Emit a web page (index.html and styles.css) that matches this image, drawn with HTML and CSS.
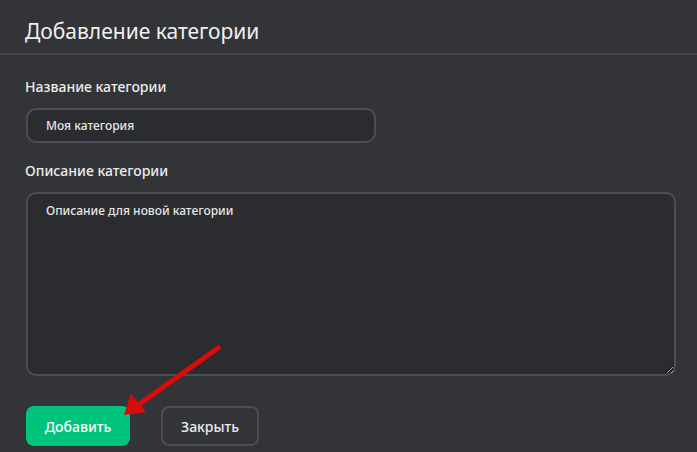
FILE: index.html
```html
<!DOCTYPE html>
<html lang="ru">

<head>
  <meta charset="UTF-8">
  <meta name="viewport" content="width=device-width, initial-scale=1.0">
  <title>Добавление категории</title>
  <link rel="stylesheet" href="styles.css">
</head>

<body>

  <div class="modal">
    <div class="modal_header">
      <h2>Добавление категории</h2>
    </div>

    <div class="modal_body">
      <label class="field_label" for="cat-name">Название категории</label>
      <input id="cat-name" class="field_input" type="text" value="Моя категория">

      <label class="field_label" for="cat-desc">Описание категории</label>
      <textarea id="cat-desc" class="field_area">Описание для новой категории</textarea>

      <div class="modal_actions">
        <button class="btn btn_primary">Добавить</button>
        <button class="btn btn_outline">Закрыть</button>
      </div>
    </div>

    <!-- annotation arrow -->
    <svg class="hint_arrow" width="110" height="80" viewBox="0 0 110 80">
      <line x1="106" y1="5" x2="22" y2="65" stroke="#dd0a0a" stroke-width="5" stroke-linecap="square" />
      <polygon points="12,72 19,51 34,69" fill="#dd0a0a" />
    </svg>
  </div>

</body>

</html>
```

FILE: styles.css
```css
body {
  margin: 0;
  background: #333438;
  font-family: "Noto Sans", "Open Sans", sans-serif;
  color: #ececec;
}

.modal {
  position: relative;
  width: 697px;
  height: 452px;
}

.modal_header {
  height: 55px;
  border-bottom: 2px solid #424348;
  box-sizing: border-box;
  padding: 16px 25px 0;
}

.modal_header h2 {
  margin: 0;
  font-size: 21px;
  font-weight: 400;
  line-height: 30px;
  color: #f0f0f0;
}

.modal_body {
  display: flex;
  flex-direction: column;
  padding: 22px 22px 0 26px;
}

.field_label {
  font-size: 14px;
  line-height: 20px;
  font-weight: 500;
  color: #ececec;
  margin-left: -1px;
  margin-bottom: 11px;
}

.field_input,
.field_area {
  font-family: inherit;
  font-size: 12px;
  font-weight: 500;
  color: #e6e6e6;
  background: #2b2c30;
  border: 2px solid #4d4e53;
  border-radius: 10px;
  box-sizing: border-box;
  outline: none;
}

.field_input {
  width: 350px;
  height: 35px;
  padding: 0 18px;
  margin-bottom: 18px;
}

.field_area {
  width: 650px;
  height: 184px;
  padding: 8px 18px;
  resize: vertical;
}

.modal_actions {
  display: flex;
  gap: 31px;
  margin-top: 30px;
}

.btn {
  font-family: inherit;
  font-size: 14px;
  font-weight: 500;
  height: 40px;
  border-radius: 8px;
  box-sizing: border-box;
  cursor: pointer;
}

.btn_primary {
  width: 104px;
  background: #00c47c;
  border: none;
  color: #ffffff;
}

.btn_outline {
  width: 98px;
  background: transparent;
  border: 2px solid #4d4e53;
  color: #ececec;
}

.hint_arrow {
  position: absolute;
  left: 112px;
  top: 343px;
}
```
